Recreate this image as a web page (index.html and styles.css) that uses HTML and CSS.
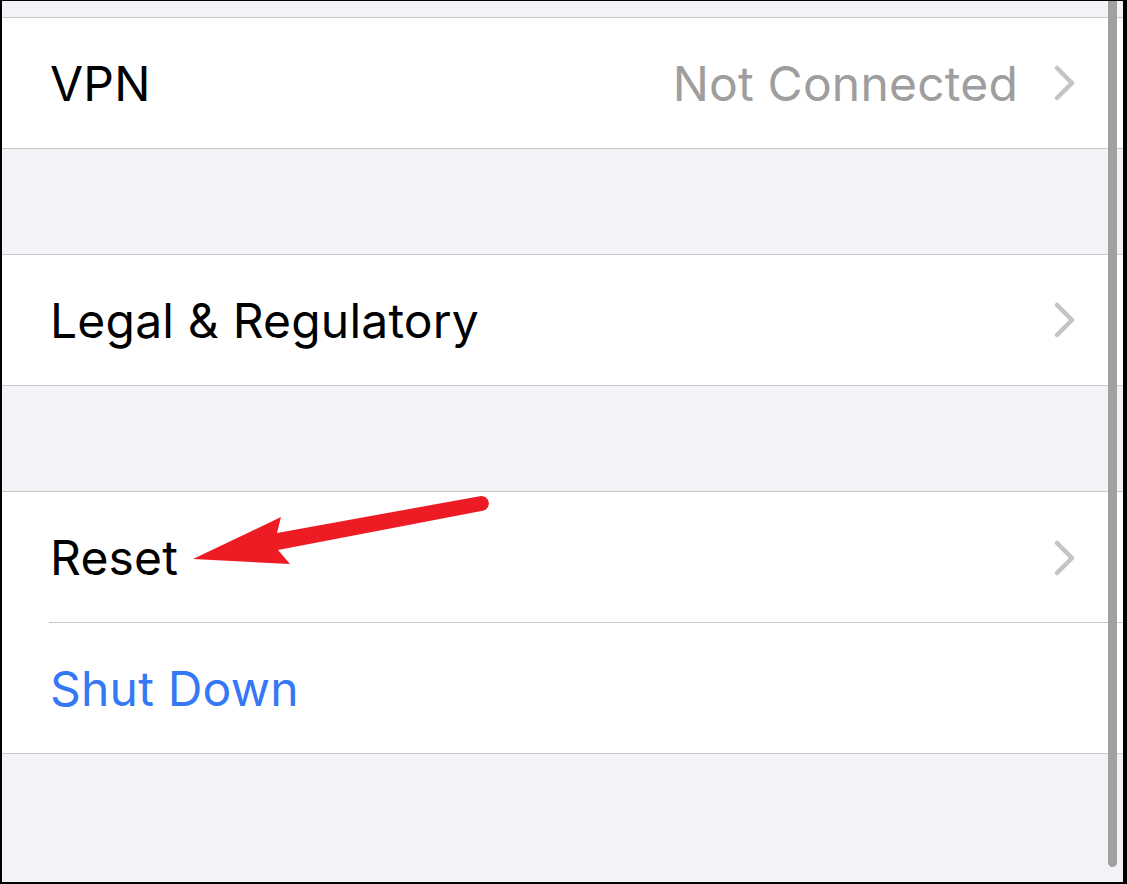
FILE: index.html
```html
<!DOCTYPE html>
<html>
<head>
<meta charset="utf-8">
<link rel="stylesheet" href="styles.css">
</head>
<body>
<div class="frame">
  <div class="top-band"></div>
  <div class="group">
    <div class="row">
      <span class="label">VPN</span>
      <span class="value">Not Connected</span>
      <svg class="chev" width="22" height="36" viewBox="0 0 22 36"><path d="M3 3 L18 18 L3 33" fill="none" stroke="#c4c4c7" stroke-width="4.5" stroke-linecap="round" stroke-linejoin="round"/></svg>
    </div>
  </div>
  <div class="band"></div>
  <div class="group">
    <div class="row">
      <span class="label">Legal &amp; Regulatory</span>
      <svg class="chev" width="22" height="36" viewBox="0 0 22 36"><path d="M3 3 L18 18 L3 33" fill="none" stroke="#c4c4c7" stroke-width="4.5" stroke-linecap="round" stroke-linejoin="round"/></svg>
    </div>
  </div>
  <div class="band"></div>
  <div class="group">
    <div class="row inset">
      <span class="label">Reset</span>
      <svg class="chev" width="22" height="36" viewBox="0 0 22 36"><path d="M3 3 L18 18 L3 33" fill="none" stroke="#c4c4c7" stroke-width="4.5" stroke-linecap="round" stroke-linejoin="round"/></svg>
    </div>
    <div class="row">
      <span class="label blue">Shut Down</span>
    </div>
  </div>
  <div class="scrollbar"></div>
  <svg class="arrow" width="1127" height="884" viewBox="0 0 1127 884">
    <path d="M193 559 L281 517 L277 533 L481 496 A7.5 7.5 0 0 1 484 510.5 L278 550 L290 564 Z" fill="#ed1c24"/>
  </svg>
</div>
</body>
</html>
```
FILE: styles.css
```css
html, body {
  margin: 0;
  padding: 0;
}
body {
  width: 1127px;
  height: 884px;
  overflow: hidden;
  font-family: Inter, "Liberation Sans", sans-serif;
}
.frame {
  position: relative;
  box-sizing: border-box;
  width: 1127px;
  height: 884px;
  background: #f2f2f7;
  border-top: 1px solid #000;
  border-left: 2px solid #000;
  border-right: 4px solid #000;
  border-bottom: 2px solid #000;
  overflow: hidden;
}
.top-band {
  height: 16px;
}
.band {
  height: 105px;
}
.group {
  background: #fff;
  border-top: 1px solid #c8c7cc;
  border-bottom: 1px solid #c8c7cc;
}
.row {
  height: 130px;
  display: flex;
  align-items: center;
  padding-left: 48px;
  padding-right: 47px;
  box-sizing: border-box;
}
.row.inset {
  height: 131px;
  position: relative;
}
.row.inset::after {
  content: "";
  position: absolute;
  left: 47px;
  right: 0;
  bottom: 0;
  height: 1px;
  background: #c8c7cc;
}
.label {
  font-size: 48px;
  color: #000;
  flex: 1;
  letter-spacing: 0.2px;
}
.label.blue {
  color: #3478f6;
}
.value {
  font-size: 48px;
  color: #9e9e9e;
  margin-right: 36px;
  letter-spacing: 0.2px;
}
.chev {
  display: block;
}
.scrollbar {
  position: absolute;
  left: 1106px;
  top: -2px;
  width: 9px;
  height: 868px;
  background: #a0a0a0;
  border-radius: 0 0 5px 5px;
}
.arrow {
  position: absolute;
  left: -2px;
  top: -1px;
}
```
